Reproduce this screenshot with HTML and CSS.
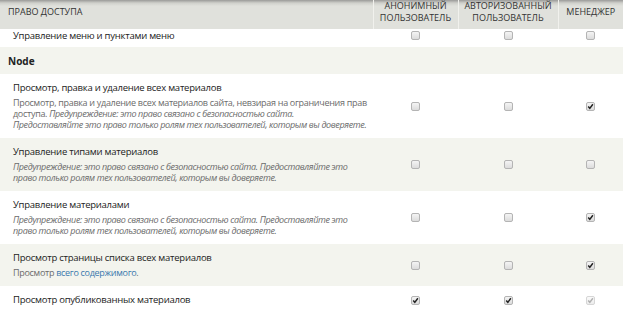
FILE: index.html
```html
<!DOCTYPE html>
<html lang="ru">
<head>
    <meta charset="UTF-8">
    <meta name="viewport" content="width=device-width, initial-scale=1.0">
    <title>Права доступа</title>
    <link rel="stylesheet" href="styles.css">
</head>
<body>
    <table class="permissions">
        <colgroup>
            <col class="col-name">
            <col class="col-anon">
            <col class="col-auth">
            <col class="col-manager">
        </colgroup>
        <thead>
            <tr>
                <th class="name-head">Право доступа</th>
                <th>Анонимный пользователь</th>
                <th>Авторизованный пользователь</th>
                <th>Менеджер</th>
            </tr>
        </thead>
        <tbody>
            <tr class="even cut">
                <td class="permission"><div class="title">Управление меню и пунктами меню</div></td>
                <td class="checkbox"><span class="box"></span></td>
                <td class="checkbox"><span class="box"></span></td>
                <td class="checkbox"><span class="box"></span></td>
            </tr>
            <tr class="module">
                <td colspan="4">Node</td>
            </tr>
            <tr class="even">
                <td class="permission">
                    <div class="title">Просмотр, правка и удаление всех материалов</div>
                    <div class="description">Просмотр, правка и удаление всех материалов сайта, невзирая на ограничения прав<br>доступа. <em>Предупреждение: это право связано с безопасностью сайта.<br>Предоставляйте это право только ролям тех пользователей, которым вы доверяете.</em></div>
                </td>
                <td class="checkbox"><span class="box"></span></td>
                <td class="checkbox"><span class="box"></span></td>
                <td class="checkbox"><span class="box checked"><svg viewBox="0 0 8 8"><path d="M1.4 4.1 L3.2 6.1 L6.7 1.5" /></svg></span></td>
            </tr>
            <tr class="odd">
                <td class="permission">
                    <div class="title">Управление типами материалов</div>
                    <div class="description"><em>Предупреждение: это право связано с безопасностью сайта. Предоставляйте это<br>право только ролям тех пользователей, которым вы доверяете.</em></div>
                </td>
                <td class="checkbox"><span class="box"></span></td>
                <td class="checkbox"><span class="box"></span></td>
                <td class="checkbox"><span class="box"></span></td>
            </tr>
            <tr class="even">
                <td class="permission">
                    <div class="title">Управление материалами</div>
                    <div class="description"><em>Предупреждение: это право связано с безопасностью сайта. Предоставляйте это<br>право только ролям тех пользователей, которым вы доверяете.</em></div>
                </td>
                <td class="checkbox"><span class="box"></span></td>
                <td class="checkbox"><span class="box"></span></td>
                <td class="checkbox"><span class="box checked"><svg viewBox="0 0 8 8"><path d="M1.4 4.1 L3.2 6.1 L6.7 1.5" /></svg></span></td>
            </tr>
            <tr class="odd">
                <td class="permission">
                    <div class="title">Просмотр страницы списка всех материалов</div>
                    <div class="description">Просмотр <a href="#">всего содержимого</a>.</div>
                </td>
                <td class="checkbox"><span class="box"></span></td>
                <td class="checkbox"><span class="box"></span></td>
                <td class="checkbox"><span class="box checked"><svg viewBox="0 0 8 8"><path d="M1.4 4.1 L3.2 6.1 L6.7 1.5" /></svg></span></td>
            </tr>
            <tr class="even">
                <td class="permission"><div class="title">Просмотр опубликованных материалов</div></td>
                <td class="checkbox"><span class="box checked"><svg viewBox="0 0 8 8"><path d="M1.4 4.1 L3.2 6.1 L6.7 1.5" /></svg></span></td>
                <td class="checkbox"><span class="box checked"><svg viewBox="0 0 8 8"><path d="M1.4 4.1 L3.2 6.1 L6.7 1.5" /></svg></span></td>
                <td class="checkbox"><span class="box checked disabled"><svg viewBox="0 0 8 8"><path d="M1.4 4.1 L3.2 6.1 L6.7 1.5" /></svg></span></td>
            </tr>
        </tbody>
    </table>
</body>
</html>
```

FILE: styles.css
```css
/* Permissions table */
body {
    margin: 0;
    font-family: "Open Sans", "DejaVu Sans", sans-serif;
    background-color: #fff;
    color: #333;
}

.permissions {
    width: 623px;
    border-collapse: collapse;
    table-layout: fixed;
}

.col-name { width: 373px; }
.col-anon { width: 85px; }
.col-auth { width: 100px; }
.col-manager { width: 65px; }

.permissions th {
    padding: 0 4px 5px;
    font-size: 9px;
    font-weight: normal;
    line-height: 12px;
    text-transform: uppercase;
    text-align: center;
    vertical-align: middle;
    color: #333;
    background: linear-gradient(to bottom, #9a9a98 0, #cfd0cb 3px, #e0e1dc 6px, #e0e1dc 100%);
    border-left: 1px solid #f1f1ed;
}

.permissions th.name-head {
    text-align: left;
    padding-left: 8px;
    border-left: none;
}

.permissions td {
    padding: 7px 0 8px 13px;
    vertical-align: middle;
}

.permissions tr.odd td,
.permissions tr.module td {
    background-color: #f3f4ee;
}

.permissions tr.cut td {
    padding-top: 0;
    padding-bottom: 5px;
}

.permissions tr.module td {
    padding: 8px 8px 6px;
    font-size: 10px;
    font-weight: bold;
    line-height: 13px;
    color: #222;
}

.title {
    font-size: 9.5px;
    letter-spacing: -0.25px;
    line-height: 13px;
    color: #222;
}

.description {
    margin-top: 3px;
    font-size: 9px;
    letter-spacing: -0.3px;
    line-height: 11px;
    white-space: nowrap;
    color: #6b6b6b;
}

.description em {
    letter-spacing: -0.35px;
}

.description a {
    color: #3a78ad;
    text-decoration: none;
}

.permissions td.checkbox {
    padding: 0;
    line-height: 0;
}

.box {
    display: block;
    width: 7px;
    height: 7px;
    margin: 0 auto;
    border: 1px solid #b4b4b4;
    border-radius: 2px;
    background: linear-gradient(to bottom, #f4f4f4, #dcdcdc);
}

.box svg {
    display: block;
    width: 7px;
    height: 7px;
}

.box svg path {
    fill: none;
    stroke: #222;
    stroke-width: 1.7;
}

.box.disabled {
    border-color: #d6d6d6;
    background: linear-gradient(to bottom, #fafafa, #ececec);
}

.box.disabled svg path {
    stroke: #b0b0b0;
}
```
